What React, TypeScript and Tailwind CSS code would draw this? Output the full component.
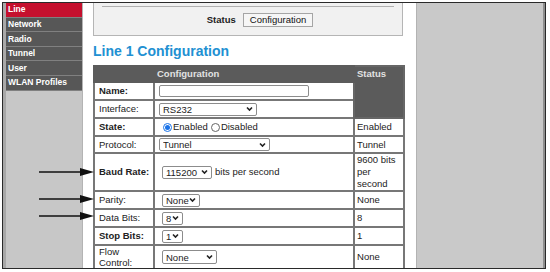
import React from "react";

const nav = ["Line", "Network", "Radio", "Tunnel", "User", "WLAN Profiles"];

function Chevron() {
  return (
    <svg
      className="pointer-events-none absolute right-[4px] top-1/2 -translate-y-1/2"
      width="7"
      height="5"
      viewBox="0 0 7 5"
    >
      <path d="M1 1 L3.5 3.5 L6 1" fill="none" stroke="#222" strokeWidth="1.6" />
    </svg>
  );
}

function Select({ value, className }: { value: string; className: string }) {
  return (
    <span className="relative inline-block align-middle">
      <select
        defaultValue={value}
        className={`appearance-none block h-[13px] border border-[#8c8c8c] rounded-[2px] bg-white pl-[3px] text-[9.5px] leading-[11px] text-[#222] outline-none ${className}`}
      >
        <option>{value}</option>
      </select>
      <Chevron />
    </span>
  );
}

function Radio({ checked }: { checked?: boolean }) {
  return checked ? (
    <span className="inline-flex w-[9px] h-[9px] rounded-full border border-[#1a73e8] items-center justify-center bg-white">
      <span className="w-[5px] h-[5px] rounded-full bg-[#1a73e8]" />
    </span>
  ) : (
    <span className="inline-block w-[9px] h-[9px] rounded-full border border-[#666] bg-white" />
  );
}

export default function App() {
  const td = "border-2 border-[#777] pl-[4px] pr-[1px] align-middle whitespace-nowrap";
  const st = "border-2 border-[#777] pl-[2px] pr-[2px] align-middle";
  return (
    <div
      className="relative w-[550px] h-[272px] bg-white pt-[2px] pl-[2px] overflow-hidden"
      style={{ fontFamily: '"Liberation Sans", Arial, sans-serif' }}
    >
      <div className="flex w-[544px] h-[267px] border border-[#2a2a2a] overflow-hidden">
        {/* Side navigation */}
        <div className="w-[80px] shrink-0 bg-[#c7c7c7] border-l-[3px] border-[#a8a8a8] border-r border-r-[#b4b4b4]">
          {nav.map((n, i) => (
            <div
              key={n}
              className={`h-[14.6px] pl-[2px] flex items-center text-[8.5px] font-bold text-white border-b border-[#808080] ${i === 0 ? "bg-[#c5102e]" : "bg-[#575757]"}`}
            >
              {n}
            </div>
          ))}
        </div>

        {/* Main content */}
        <div className="w-[333px] shrink-0 bg-white pl-[10px]">
          <div className="w-[310px] h-[33px] bg-[#f1f1f1] border border-t-0 border-[#b5b5b5] pt-[3px] px-[8px]">
            <div className="h-px bg-[#b0b0b0]" />
            <div className="flex items-center justify-center gap-[7px] mt-[6px] pl-[24px]">
              <span className="text-[9.5px] font-bold text-[#222]">Status</span>
              <span className="h-[14px] px-[6px] flex items-center border border-[#a5a5a5] bg-[#f6f6f6] text-[9.5px] text-[#111]">
                Configuration
              </span>
            </div>
          </div>

          <h1 className="mt-[7px] text-[14px] leading-[16px] font-bold text-[#2190d2]">
            Line 1 Configuration
          </h1>

          <table className="mt-[6px] w-[310px] table-fixed border-collapse border-2 border-[#666] text-[9.5px] text-[#222] leading-[12px]">
            <colgroup>
              <col className="w-[60px]" />
              <col className="w-[200px]" />
              <col className="w-[50px]" />
            </colgroup>
            <tbody>
              <tr className="h-[16px]">
                <th
                  colSpan={2}
                  className="bg-[#5b5b5b] border-2 border-[#5b5b5b] text-left pl-[62px] font-bold text-[#e2e2e2]"
                >
                  Configuration
                </th>
                <th
                  rowSpan={3}
                  className="bg-[#5b5b5b] border-2 border-[#666] align-top text-left pl-[2px] pt-[1px] font-bold text-[#e2e2e2]"
                >
                  Status
                </th>
              </tr>
              <tr className="h-[18px]">
                <td className={`${td} font-bold`}>Name:</td>
                <td className={td}>
                  <span className="block w-[150px] h-[12px] border border-[#8c8c8c] rounded-[2px] bg-white" />
                </td>
              </tr>
              <tr className="h-[18px]">
                <td className={td}>Interface:</td>
                <td className={td}>
                  <Select value="RS232" className="w-[98px] pr-[12px]" />
                </td>
              </tr>
              <tr className="h-[18px]">
                <td className={`${td} font-bold`}>State:</td>
                <td className={td}>
                  <span className="flex items-center pl-[4px]">
                    <Radio checked />
                    <span className="ml-[1px]">Enabled</span>
                    <span className="ml-[3px] flex items-center">
                      <Radio />
                    </span>
                    <span className="ml-[1px]">Disabled</span>
                  </span>
                </td>
                <td className={st}>Enabled</td>
              </tr>
              <tr className="h-[17px]">
                <td className={td}>Protocol:</td>
                <td className={td}>
                  <Select value="Tunnel" className="w-[111px] pr-[12px]" />
                </td>
                <td className={st}>Tunnel</td>
              </tr>
              <tr className="h-[36px]">
                <td className={`${td} font-bold`}>Baud Rate:</td>
                <td className={td}>
                  <span className="flex items-center pl-[3px]">
                    <Select value="115200" className="w-[50px] pr-[11px]" />
                    <span className="ml-[3px]">bits per second</span>
                  </span>
                </td>
                <td className={st}>9600 bits per second</td>
              </tr>
              <tr className="h-[18px]">
                <td className={td}>Parity:</td>
                <td className={td}>
                  <span className="pl-[3px]">
                    <Select value="None" className="w-[38px] pr-[9px]" />
                  </span>
                </td>
                <td className={st}>None</td>
              </tr>
              <tr className="h-[18px]">
                <td className={td}>Data Bits:</td>
                <td className={td}>
                  <span className="pl-[3px]">
                    <Select value="8" className="w-[21px] pr-[2px]" />
                  </span>
                </td>
                <td className={st}>8</td>
              </tr>
              <tr className="h-[18px]">
                <td className={`${td} font-bold`}>Stop Bits:</td>
                <td className={td}>
                  <span className="pl-[3px]">
                    <Select value="1" className="w-[21px] pr-[2px]" />
                  </span>
                </td>
                <td className={st}>1</td>
              </tr>
              <tr className="h-[22px]">
                <td className="border-2 border-[#777] pl-[4px] pr-[1px] align-middle leading-[11px]">
                  Flow Control:
                </td>
                <td className={td}>
                  <span className="pl-[3px]">
                    <Select value="None" className="w-[55px] h-[14px] pr-[12px]" />
                  </span>
                </td>
                <td className={st}>None</td>
              </tr>
            </tbody>
          </table>
        </div>

        {/* Right empty panel */}
        <div className="flex-1 bg-[#c9c9c9] border-l border-[#b3b3b3] border-r-2 border-r-[#8e8e8e]" />
      </div>

      {/* Annotation arrows */}
      <svg className="pointer-events-none absolute left-0 top-0" width="100" height="272">
        {[172, 199, 216].map((y) => (
          <g key={y}>
            <line x1="39" y1={y} x2="82" y2={y} stroke="#111" strokeWidth="1.3" />
            <polygon points={`80,${y - 4} 94,${y} 80,${y + 4}`} fill="#111" />
          </g>
        ))}
      </svg>
    </div>
  );
}
